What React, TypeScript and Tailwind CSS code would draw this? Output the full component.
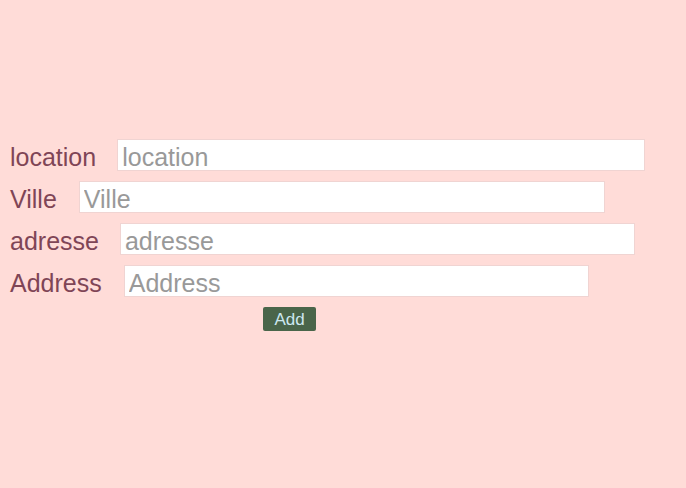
const fields = [
  { label: "location", width: "w-[528px]", gap: "ml-[21px]" },
  { label: "Ville", width: "w-[526px]", gap: "ml-[22px]" },
  { label: "adresse", width: "w-[515px]", gap: "ml-[21px]" },
  { label: "Address", width: "w-[465px]", gap: "ml-[22px]" },
];

export default function App() {
  return (
    <div className="min-h-[488px] w-full bg-[#ffdcd8] pt-[139px] pl-[10px] font-['Liberation_Sans',Arial,sans-serif]">
      <form className="flex flex-col gap-[10px]">
        {fields.map((f) => (
          <div key={f.label} className="flex items-center">
            <label className="mt-[5px] text-[25px] leading-none text-[#7f4556]">{f.label}</label>
            <input
              placeholder={f.label}
              className={`${f.width} ${f.gap} h-[32px] border border-[#f0d4d2] bg-white px-[4px] pt-[5px] pb-0 text-[25px] leading-none text-[#555] placeholder:text-[#999] outline-none`}
            />
          </div>
        ))}
        <div className="pl-[253px]">
          <button
            type="button"
            className="h-[24px] w-[53px] rounded-[2px] bg-[#4a654a] text-[17px] leading-none text-[#cde8f0]"
          >
            Add
          </button>
        </div>
      </form>
    </div>
  );
}
